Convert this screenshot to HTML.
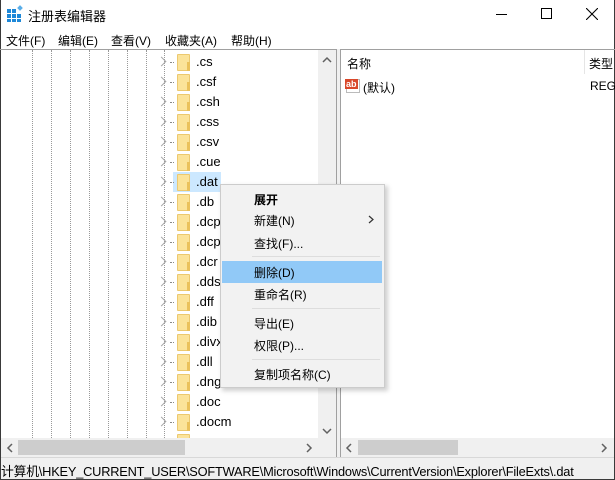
<!DOCTYPE html>
<html><head><meta charset="utf-8"><style>
*{margin:0;padding:0;box-sizing:border-box}
body{width:615px;height:480px;overflow:hidden;background:#fff;font-family:"Liberation Sans","Noto Sans CJK SC",sans-serif;font-size:12px;color:#000;position:relative}
.abs{position:absolute}
.t{white-space:nowrap}
.row{position:absolute;left:0;height:20px;width:318px}
.fold{position:absolute;left:177px;top:2px;width:13px;height:17px;background:#fbe39a;border:1px solid #ecc970;border-radius:1px}
.fold:after{content:"";position:absolute;right:-1px;bottom:-1px;width:3px;height:9px;background:#eac15c}
.arr{position:absolute;left:158px;top:6px;width:7px;height:7px;border-right:1.5px solid #a8a8a8;border-top:1.5px solid #a8a8a8;transform:rotate(45deg)}
.dot{position:absolute;left:170px;top:10px;width:4px;border-top:1px dotted #888}
.lbl{position:absolute;left:196px;top:2px;font-size:13px}
.vl{position:absolute;top:50px;height:388px;border-left:1px dotted #999}
.mi{position:absolute;left:254px;font-size:12px}
.sep{position:absolute;left:252px;width:128px;height:1px;background:#ddd}
</style></head><body>
<div class="abs" style="left:0;top:0;width:615px;height:480px;border:1px solid #3a3a3a;border-top:none"></div>
<svg class="abs" style="left:6px;top:5px" width="18" height="18" viewBox="0 0 18 18">
<g fill="#1e88d8"><rect x="1" y="4" width="4" height="4"/><rect x="6" y="4" width="4" height="4"/><rect x="1" y="9" width="4" height="4"/><rect x="6" y="9" width="4" height="4"/><rect x="11" y="9" width="4" height="4"/><rect x="1" y="14" width="4" height="3"/><rect x="6" y="14" width="4" height="3"/><rect x="11" y="14" width="4" height="3"/></g>
<rect x="12" y="1" width="4" height="4" fill="#5aaee8" transform="rotate(45 14 3)"/></svg>
<div class="abs t" style="left:28px;top:6px;font-size:13px">注册表编辑器</div>
<div class="abs" style="left:496px;top:14px;width:11px;height:1px;background:#000"></div>
<div class="abs" style="left:541px;top:8px;width:11px;height:11px;border:1px solid #000"></div>
<svg class="abs" style="left:586px;top:8px" width="12" height="12"><path d="M0 0L12 12M12 0L0 12" stroke="#000" stroke-width="1.1"/></svg>
<div class="abs t" style="left:6px;top:32px">文件(F)</div>
<div class="abs t" style="left:58px;top:32px">编辑(E)</div>
<div class="abs t" style="left:111px;top:32px">查看(V)</div>
<div class="abs t" style="left:165px;top:32px">收藏夹(A)</div>
<div class="abs t" style="left:231px;top:32px">帮助(H)</div>
<div class="abs" style="left:0;top:49px;width:337px;height:408px;border-top:1px solid #a0a0a0;border-right:1px solid #a0a0a0"></div>
<div class="vl" style="left:32px"></div><div class="vl" style="left:51px"></div><div class="vl" style="left:70px"></div><div class="vl" style="left:89px"></div><div class="vl" style="left:108px"></div><div class="vl" style="left:127px"></div><div class="vl" style="left:146px"></div><div class="vl" style="left:164px"></div>
<div class="abs" style="left:173px;top:172px;width:48px;height:20px;background:#cce8ff"></div>
<div class="row" style="top:52px"><div class="arr"></div><div class="dot"></div><div class="fold"></div><div class="lbl">.cs</div></div>
<div class="row" style="top:72px"><div class="arr"></div><div class="dot"></div><div class="fold"></div><div class="lbl">.csf</div></div>
<div class="row" style="top:92px"><div class="arr"></div><div class="dot"></div><div class="fold"></div><div class="lbl">.csh</div></div>
<div class="row" style="top:112px"><div class="arr"></div><div class="dot"></div><div class="fold"></div><div class="lbl">.css</div></div>
<div class="row" style="top:132px"><div class="arr"></div><div class="dot"></div><div class="fold"></div><div class="lbl">.csv</div></div>
<div class="row" style="top:152px"><div class="arr"></div><div class="dot"></div><div class="fold"></div><div class="lbl">.cue</div></div>
<div class="row" style="top:172px"><div class="arr"></div><div class="dot"></div><div class="fold"></div><div class="lbl">.dat</div></div>
<div class="row" style="top:192px"><div class="arr"></div><div class="dot"></div><div class="fold"></div><div class="lbl">.db</div></div>
<div class="row" style="top:212px"><div class="arr"></div><div class="dot"></div><div class="fold"></div><div class="lbl">.dcp</div></div>
<div class="row" style="top:232px"><div class="arr"></div><div class="dot"></div><div class="fold"></div><div class="lbl">.dcp</div></div>
<div class="row" style="top:252px"><div class="arr"></div><div class="dot"></div><div class="fold"></div><div class="lbl">.dcr</div></div>
<div class="row" style="top:272px"><div class="arr"></div><div class="dot"></div><div class="fold"></div><div class="lbl">.dds</div></div>
<div class="row" style="top:292px"><div class="arr"></div><div class="dot"></div><div class="fold"></div><div class="lbl">.dff</div></div>
<div class="row" style="top:312px"><div class="arr"></div><div class="dot"></div><div class="fold"></div><div class="lbl">.dib</div></div>
<div class="row" style="top:332px"><div class="arr"></div><div class="dot"></div><div class="fold"></div><div class="lbl">.divx</div></div>
<div class="row" style="top:352px"><div class="arr"></div><div class="dot"></div><div class="fold"></div><div class="lbl">.dll</div></div>
<div class="row" style="top:372px"><div class="arr"></div><div class="dot"></div><div class="fold"></div><div class="lbl">.dng</div></div>
<div class="row" style="top:392px"><div class="arr"></div><div class="dot"></div><div class="fold"></div><div class="lbl">.doc</div></div>
<div class="row" style="top:412px"><div class="arr"></div><div class="dot"></div><div class="fold"></div><div class="lbl">.docm</div></div>
<div class="row" style="top:432px;height:6px;overflow:hidden"><div class="fold"></div></div>
<div class="abs" style="left:318px;top:50px;width:18px;height:388px;background:#f0f0f0"></div>
<svg class="abs" style="left:322px;top:56px" width="10" height="8"><path d="M1 6L5 2L9 6" fill="none" stroke="#606060" stroke-width="1.5"/></svg>
<svg class="abs" style="left:322px;top:427px" width="10" height="8"><path d="M1 2L5 6L9 2" fill="none" stroke="#606060" stroke-width="1.5"/></svg>
<div class="abs" style="left:1px;top:438px;width:335px;height:19px;background:#f0f0f0"></div>
<div class="abs" style="left:18px;top:440px;width:167px;height:15px;background:#cdcdcd"></div>
<svg class="abs" style="left:6px;top:443px" width="8" height="10"><path d="M6 1L2 5L6 9" fill="none" stroke="#606060" stroke-width="1.5"/></svg>
<svg class="abs" style="left:305px;top:443px" width="8" height="10"><path d="M2 1L6 5L2 9" fill="none" stroke="#606060" stroke-width="1.5"/></svg>
<div class="abs" style="left:337px;top:49px;width:3px;height:408px;background:#f0f0f0"></div>
<div class="abs" style="left:340px;top:49px;width:275px;height:408px;border-top:1px solid #a0a0a0;border-left:1px solid #a0a0a0"></div>
<div class="abs" style="left:584px;top:50px;width:1px;height:24px;background:#e5e5e5"></div>
<div class="abs t" style="left:347px;top:55px">名称</div>
<div class="abs t" style="left:589px;top:55px">类型</div>
<div class="abs" style="left:346px;top:79px;width:14px;height:14px;border:1px solid #bbb;background:#fff"></div>
<div class="abs t" style="left:345px;top:79px;font-size:9px;font-weight:bold;color:#fff;background:#d9482b;padding:0 1px;line-height:10px">ab</div>
<div class="abs t" style="left:363px;top:79px">(默认)</div>
<div class="abs t" style="left:590px;top:79px">REG</div>
<div class="abs" style="left:341px;top:438px;width:273px;height:19px;background:#f0f0f0"></div>
<div class="abs" style="left:358px;top:440px;width:100px;height:15px;background:#cdcdcd"></div>
<svg class="abs" style="left:345px;top:443px" width="8" height="10"><path d="M6 1L2 5L6 9" fill="none" stroke="#606060" stroke-width="1.5"/></svg>
<svg class="abs" style="left:600px;top:443px" width="8" height="10"><path d="M2 1L6 5L2 9" fill="none" stroke="#606060" stroke-width="1.5"/></svg>
<div class="abs" style="left:1px;top:457px;width:613px;height:22px;background:#f0f0f0;border-top:1px solid #d8d8d8"></div>
<div class="abs t" style="left:1px;top:461px;font-size:12.8px;letter-spacing:-0.2px">计算机\HKEY_CURRENT_USER\SOFTWARE\Microsoft\Windows\CurrentVersion\Explorer\FileExts\.dat</div>
<div class="abs" style="left:222px;top:186px;width:166px;height:205px;background:rgba(0,0,0,0.18);filter:blur(2px)"></div>
<div class="abs" style="left:220px;top:184px;width:165px;height:204px;background:#f2f2f2;border:1px solid #ccc"></div>
<div class="abs" style="left:222px;top:261px;width:160px;height:22px;background:#91c9f7"></div>
<div class="mi t" style="top:191px;font-weight:bold">展开</div>
<div class="mi t" style="top:212px">新建(N)</div>
<svg class="abs" style="left:368px;top:215px" width="6" height="9"><path d="M1 1L5 4.5L1 8" fill="none" stroke="#333" stroke-width="1.2"/></svg>
<div class="mi t" style="top:235px">查找(F)...</div>
<div class="sep" style="top:256px"></div>
<div class="mi t" style="top:264px">删除(D)</div>
<div class="mi t" style="top:286px">重命名(R)</div>
<div class="sep" style="top:308px"></div>
<div class="mi t" style="top:315px">导出(E)</div>
<div class="mi t" style="top:337px">权限(P)...</div>
<div class="sep" style="top:359px"></div>
<div class="mi t" style="top:366px">复制项名称(C)</div>
</body></html>
